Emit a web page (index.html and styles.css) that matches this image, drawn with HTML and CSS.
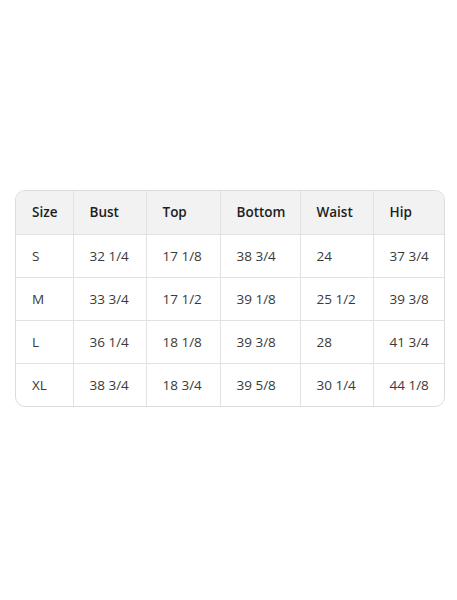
FILE: index.html
```html
<!DOCTYPE html>
<html>
<head>
<meta charset="utf-8">
<link rel="stylesheet" href="styles.css">
</head>
<body>
<div class="page">
  <div class="card">
    <table class="sizes">
      <colgroup>
        <col class="c1"><col class="c2"><col class="c3"><col class="c4"><col class="c5"><col class="c6">
      </colgroup>
      <thead>
        <tr><th>Size</th><th>Bust</th><th>Top</th><th>Bottom</th><th>Waist</th><th>Hip</th></tr>
      </thead>
      <tbody>
        <tr><td>S</td><td>32 1/4</td><td>17 1/8</td><td>38 3/4</td><td>24</td><td>37 3/4</td></tr>
        <tr><td>M</td><td>33 3/4</td><td>17 1/2</td><td>39 1/8</td><td>25 1/2</td><td>39 3/8</td></tr>
        <tr><td>L</td><td>36 1/4</td><td>18 1/8</td><td>39 3/8</td><td>28</td><td>41 3/4</td></tr>
        <tr><td>XL</td><td>38 3/4</td><td>18 3/4</td><td>39 5/8</td><td>30 1/4</td><td>44 1/8</td></tr>
      </tbody>
    </table>
  </div>
</div>
</body>
</html>
```
FILE: styles.css
```css
html, body {
  margin: 0;
  padding: 0;
  background: #ffffff;
}
.page {
  height: 600px;
  display: flex;
  align-items: center;
  justify-content: flex-start;
  padding-left: 15px;
  box-sizing: border-box;
}
.card {
  width: 430px;
  border: 1px solid #dcdcdc;
  border-radius: 10px;
  overflow: hidden;
  box-sizing: border-box;
  margin-top: -4px;
}
.sizes {
  width: 100%;
  border-collapse: collapse;
  table-layout: fixed;
  font-family: "Open Sans", "Noto Sans", sans-serif;
  font-size: 13.5px;
}
.c1 { width: 57px; }
.c2 { width: 73px; }
.c3 { width: 74px; }
.c4 { width: 80px; }
.c5 { width: 73px; }
.c6 { width: auto; }
.sizes th, .sizes td {
  text-align: left;
  padding: 0 0 0 16px;
  border-right: 1px solid #e2e2e2;
  border-bottom: 1px solid #e2e2e2;
  white-space: nowrap;
}
.sizes th:last-child, .sizes td:last-child { border-right: none; }
.sizes tbody tr:last-child td { border-bottom: none; }
.sizes th {
  height: 43px;
  background: #f2f2f2;
  color: #1e1e1e;
  font-weight: 600;
}
.sizes td {
  height: 42px;
  color: #3a3a3a;
}
```
